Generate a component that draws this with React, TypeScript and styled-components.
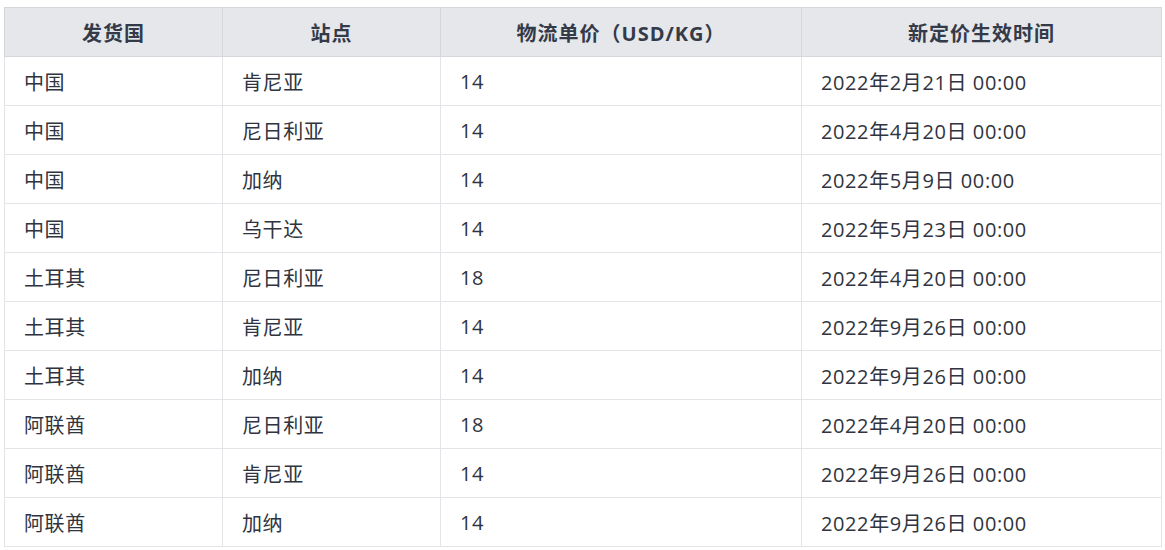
import styled, { createGlobalStyle } from "styled-components";

const GlobalStyle = createGlobalStyle`
    body {
        margin: 0;
        background: #ffffff;
        font-family: "Open Sans", "Noto Sans CJK SC", sans-serif;
    }
`;

const rows = [
    ["中国", "肯尼亚", "14", "2022年2月21日 00:00"],
    ["中国", "尼日利亚", "14", "2022年4月20日 00:00"],
    ["中国", "加纳", "14", "2022年5月9日 00:00"],
    ["中国", "乌干达", "14", "2022年5月23日 00:00"],
    ["土耳其", "尼日利亚", "18", "2022年4月20日 00:00"],
    ["土耳其", "肯尼亚", "14", "2022年9月26日 00:00"],
    ["土耳其", "加纳", "14", "2022年9月26日 00:00"],
    ["阿联酋", "尼日利亚", "18", "2022年4月20日 00:00"],
    ["阿联酋", "肯尼亚", "14", "2022年9月26日 00:00"],
    ["阿联酋", "加纳", "14", "2022年9月26日 00:00"],
];

const headers = ["发货国", "站点", "物流单价（USD/KG）", "新定价生效时间"];
const widths = [218, 218, 361, 360];

const App = () => {
    return (
        <Wrapper>
            <GlobalStyle />
            <Table>
                <colgroup>
                    {widths.map((w, i) => (
                        <col key={i} style={{ width: w }} />
                    ))}
                </colgroup>
                <thead>
                    <tr>
                        {headers.map((h) => (
                            <HeadCell key={h}>{h}</HeadCell>
                        ))}
                    </tr>
                </thead>
                <tbody>
                    {rows.map((r, i) => (
                        <tr key={i}>
                            {r.map((c, j) => (
                                <Cell key={j}>{c}</Cell>
                            ))}
                        </tr>
                    ))}
                </tbody>
            </Table>
        </Wrapper>
    );
};

export default App;

const Wrapper = styled.div`
    padding: 7px 4px;
`;

const Table = styled.table`
    width: 1157px;
    border-collapse: collapse;
    table-layout: fixed;
    font-family: "Open Sans", "Noto Sans CJK SC", sans-serif;
`;

const HeadCell = styled.th`
    height: 48px;
    padding: 0 20px;
    background: #e5e7eb;
    border: 1px solid #d4d6db;
    color: #343a48;
    font-size: 20px;
    font-weight: 700;
    letter-spacing: 1px;
    text-align: center;
    white-space: nowrap;
`;

const Cell = styled.td`
    height: 48px;
    padding: 0 19px;
    border: 1px solid #e3e4e7;
    color: #2f3440;
    font-size: 20px;
    letter-spacing: 0.6px;
    text-align: left;
    white-space: nowrap;
`;
